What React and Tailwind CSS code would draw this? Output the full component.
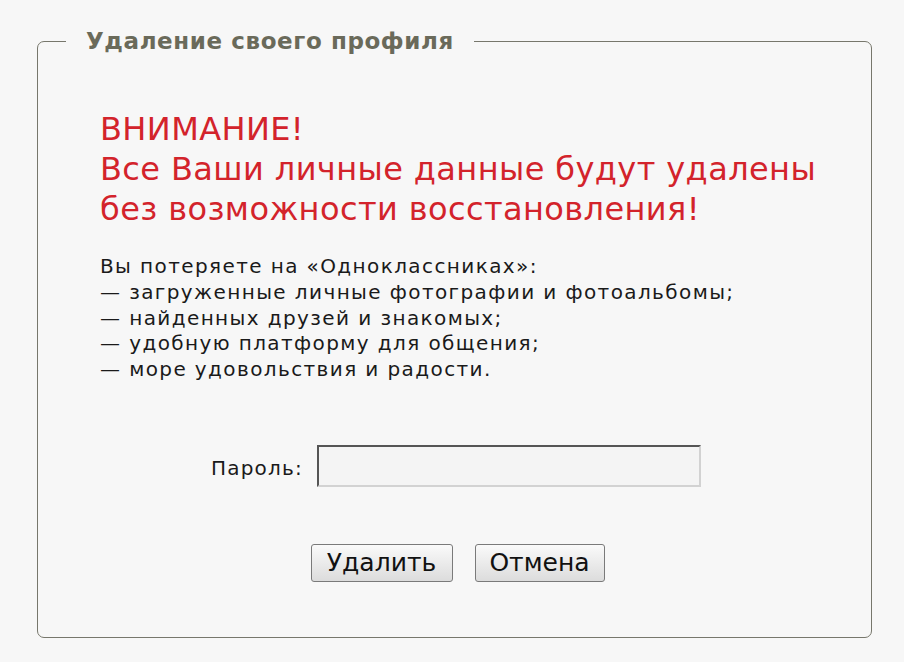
import React from 'react';

const lossItems = [
  'загруженные личные фотографии и фотоальбомы;',
  'найденных друзей и знакомых;',
  'удобную платформу для общения;',
  'море удовольствия и радости.',
];

const verdana = { fontFamily: '"DejaVu Sans", Verdana, sans-serif' };

function App() {
  return (
    <div className="w-[904px] h-[662px] bg-[#f7f7f7] pt-[30px] pl-[37px]">
      <fieldset className="w-[835px] h-[608px] border border-[#77776c] rounded-[7px] p-0 m-0">
        <legend
          className="ml-[28px] px-[20px] text-[23px] tracking-[0.6px] font-bold text-[#6a6a5a] leading-[22px]"
          style={verdana}
        >
          Удаление своего профиля
        </legend>

        <div className="pl-[62px]">
          {/* warning */}
          <div
            className="mt-[57px] text-[32px] tracking-[0.4px] leading-[40px] text-[#d3232b]"
            style={verdana}
          >
            <div>ВНИМАНИЕ!</div>
            <div>Все Ваши личные данные будут удалены</div>
            <div>без возможности восстановления!</div>
          </div>

          <div
            className="mt-[25px] text-[20px] tracking-[1.4px] leading-[25.8px] text-[#1a1a1a]"
            style={verdana}
          >
            <div>Вы потеряете на «Одноклассниках»:</div>
            {lossItems.map((item, i) => (
              <div key={i}>— {item}</div>
            ))}
          </div>

          {/* password */}
          <div className="mt-[62px] flex items-center pl-[111px] gap-[14px]">
            <label className="text-[20px] tracking-[1.2px] text-[#1a1a1a] pt-[4px]" style={verdana}>
              Пароль:
            </label>
            <input
              type="password"
              className="w-[384px] h-[42px] bg-[#f4f4f4] border-2 border-t-[#555] border-l-[#555] border-r-[#d2d2d2] border-b-[#d2d2d2] outline-none"
            />
          </div>

          {/* buttons */}
          <div className="mt-[57px] flex justify-center gap-[22px] pr-[56px]" style={verdana}>
            <button className="w-[142px] h-[38px] text-[25px] leading-[36px] text-[#111] rounded-[3px] border border-[#7a7a7a] bg-gradient-to-b from-[#fafafa] to-[#dcdcdc]">
              Удалить
            </button>
            <button className="w-[130px] h-[38px] text-[25px] leading-[36px] text-[#111] rounded-[3px] border border-[#7a7a7a] bg-gradient-to-b from-[#fafafa] to-[#dcdcdc]">
              Отмена
            </button>
          </div>
        </div>
      </fieldset>
    </div>
  );
}

export default App;
